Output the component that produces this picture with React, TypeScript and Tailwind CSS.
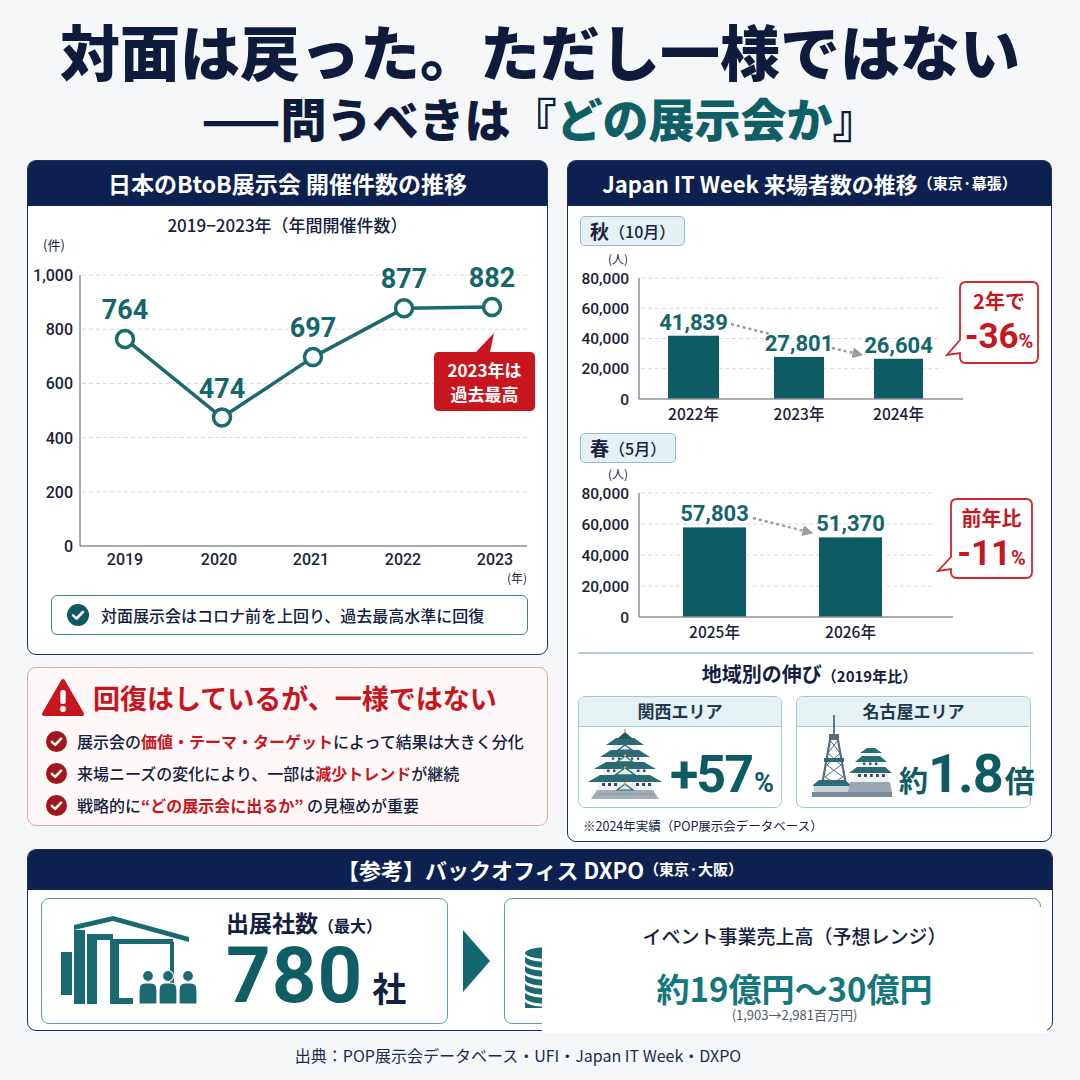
import React from 'react'

const NUM = "Roboto, 'Noto Sans CJK JP', sans-serif"
const JP = "'Noto Sans CJK JP', 'Noto Sans', sans-serif"

function Check({ color, size = 21 }: { color: string; size?: number }) {
  return (
    <svg width={size} height={size} viewBox="0 0 20 20" className="shrink-0">
      <circle cx="10" cy="10" r="10" fill={color} />
      <path d="M5.6 10.3 L8.7 13.3 L14.4 7.3" fill="none" stroke="#fff" strokeWidth="2.4" strokeLinecap="round" strokeLinejoin="round" />
    </svg>
  )
}

function Warning() {
  return (
    <svg width="44" height="40" viewBox="0 0 44 40" className="shrink-0">
      <path d="M22 3 L41 36 H3 Z" fill="#c8161e" stroke="#c8161e" strokeWidth="4" strokeLinejoin="round" />
      <rect x="19.3" y="12" width="5.4" height="14" rx="2" fill="#fff" />
      <circle cx="22" cy="31" r="2.9" fill="#fff" />
    </svg>
  )
}

function CountChart() {
  const base = 310
  const y = (v: number) => base - v * 0.271
  const pts = [
    { x: 97, v: 764 },
    { x: 194, v: 474 },
    { x: 285, v: 697 },
    { x: 376, v: 877 },
    { x: 464, v: 882 },
  ]
  const years: [string, number][] = [['2019', 97], ['2020', 191], ['2021', 283], ['2022', 375], ['2023', 467]]
  const ticks: [number, string][] = [[0, '0'], [200, '200'], [400, '400'], [600, '600'], [800, '800'], [1000, '1,000']]
  return (
    <svg width="519" height="353" viewBox="0 0 519 353" className="block">
      <text x="26" y="14" fontSize="13" textAnchor="middle" fill="#13213f" fontFamily={JP}>(件)</text>
      {ticks.map(([v, l]) => (
        <g key={v}>
          {v > 0 && <line x1="54" x2="502" y1={y(v)} y2={y(v)} stroke="#d6dade" strokeDasharray="4 3" />}
          <text x="45" y={y(v) + 6} fontSize="16" fontWeight="500" textAnchor="end" fill="#1a2238" fontFamily={NUM}>{l}</text>
        </g>
      ))}
      <line x1="52" x2="52" y1={y(1000)} y2={base} stroke="#8d9198" strokeWidth="1.5" />
      <line x1="52" x2="499" y1={base} y2={base} stroke="#8d9198" strokeWidth="1.5" />
      <polyline points={pts.map(p => `${p.x},${y(p.v)}`).join(' ')} fill="none" stroke="#1a6a70" strokeWidth="3.5" strokeLinejoin="round" />
      {pts.map(p => (
        <g key={p.x}>
          <circle cx={p.x} cy={y(p.v)} r="8.5" fill="#fff" stroke="#1a6a70" strokeWidth="3.5" />
          <text x={p.x} y={y(p.v) - 20} fontSize="27" fontWeight="700" textAnchor="middle" fill="#15666c" fontFamily={NUM}>{p.v}</text>
        </g>
      ))}
      {years.map(([l, x]) => (
        <text key={l} x={x} y="329" fontSize="16" fontWeight="500" textAnchor="middle" fill="#1a2238" fontFamily={NUM}>{l}</text>
      ))}
      <text x="489" y="347" fontSize="12" textAnchor="middle" fill="#1a2238" fontFamily={JP}>(年)</text>
      <path d="M411 116 H448 L466 97 L462 116 H502 Q507 116 507 121 V170 Q507 175 502 175 H411 Q406 175 406 170 V121 Q406 116 411 116 Z" fill="#c8161e" />
      <text x="456.5" y="141" fontSize="17" fontWeight="700" textAnchor="middle" fill="#fff" fontFamily={JP}>2023年は</text>
      <text x="456.5" y="165" fontSize="17" fontWeight="700" textAnchor="middle" fill="#fff" fontFamily={JP}>過去最高</text>
    </svg>
  )
}

type Bar = { x0: number; x1: number; v: number; label: string; year: string }
type Arrow = { x1: number; y1: number; x2: number; y2: number; head: boolean }
type Callout = { x0: number; x1: number; y0: number; y1: number; ax: number; ay: number; tb0: number; tb1: number; line1: string; big: string }

function BarChart({ id, height, yTop, yBase, gridEnd, axisEnd, yearY, bars, arrows, callout }: {
  id: string; height: number; yTop: number; yBase: number; gridEnd: number; axisEnd: number; yearY: number
  bars: Bar[]; arrows: Arrow[]; callout: Callout
}) {
  const y = (v: number) => yBase - (v / 80000) * (yBase - yTop)
  const ticks: [number, string][] = [[0, '0'], [20000, '20,000'], [40000, '40,000'], [60000, '60,000'], [80000, '80,000']]
  const c = callout
  const r = 6
  const d = `M${c.x0 + r} ${c.y0} H${c.x1 - r} Q${c.x1} ${c.y0} ${c.x1} ${c.y0 + r} V${c.y1 - r} Q${c.x1} ${c.y1} ${c.x1 - r} ${c.y1} H${c.x0 + r} Q${c.x0} ${c.y1} ${c.x0} ${c.y1 - r} V${c.tb1} L${c.ax} ${c.ay} L${c.x0} ${c.tb0} V${c.y0 + r} Q${c.x0} ${c.y0} ${c.x0 + r} ${c.y0} Z`
  const cx = (c.x0 + c.x1) / 2
  return (
    <svg width="483" height={height} viewBox={`0 0 483 ${height}`} className="block">
      <defs>
        <marker id={id} viewBox="0 0 10 10" refX="5" refY="5" markerWidth="4.4" markerHeight="4.4" orient="auto">
          <path d="M0 0 L10 5 L0 10 Z" fill="#9a9da2" />
        </marker>
      </defs>
      <text x="50" y={yTop - 14} fontSize="12" textAnchor="middle" fill="#1a2238" fontFamily={JP}>(人)</text>
      {ticks.map(([v, l]) => (
        <g key={v}>
          {v > 0 && <line x1="73" x2={gridEnd} y1={y(v)} y2={y(v)} stroke="#d6dade" strokeDasharray="4 3" />}
          <text x="61" y={y(v) + 5.5} fontSize="15.5" fontWeight="500" textAnchor="end" fill="#1a2238" fontFamily={NUM}>{l}</text>
        </g>
      ))}
      <line x1="71" x2="71" y1={yTop} y2={yBase} stroke="#8d9198" strokeWidth="1.5" />
      {bars.map(b => (
        <g key={b.year}>
          <rect x={b.x0} y={y(b.v)} width={b.x1 - b.x0} height={yBase - y(b.v)} fill="#0d5b63" />
          <text x={(b.x0 + b.x1) / 2} y={y(b.v) - 6} fontSize="22" fontWeight="700" textAnchor="middle" fill="#15666c" fontFamily={NUM}>{b.label}</text>
          <text x={(b.x0 + b.x1) / 2} y={yearY} fontSize="15.5" fontWeight="500" textAnchor="middle" fill="#1a2238" fontFamily={JP}>{b.year}</text>
        </g>
      ))}
      <line x1="71" x2={axisEnd} y1={yBase} y2={yBase} stroke="#8d9198" strokeWidth="1.5" />
      {arrows.map((a, i) => (
        <line key={i} x1={a.x1} y1={a.y1} x2={a.x2} y2={a.y2} stroke="#9a9da2" strokeWidth="2.5" strokeDasharray="3 3" markerEnd={a.head ? `url(#${id})` : undefined} />
      ))}
      <path d={d} fill="#fff" stroke="#d0262d" strokeWidth="1.8" />
      <text x={cx} y={c.y0 + 27} fontSize="20" fontWeight="700" textAnchor="middle" fill="#c8161e" fontFamily={JP}>{c.line1}</text>
      <text x={cx} y={c.y0 + 66} textAnchor="middle" fill="#c8161e" fontWeight="700" fontFamily={NUM}>
        <tspan fontSize="35">{c.big}</tspan>
        <tspan fontSize="20">%</tspan>
      </text>
    </svg>
  )
}

function SeasonTag({ main, sub }: { main: string; sub: string }) {
  return (
    <div className="inline-flex items-center h-[30px] px-[9px] rounded-[5px] border-[1.5px] border-[#8fbcc6] bg-[#e5f0f3] text-[#14213d]">
      <span className="text-[19px] font-bold">{main}</span>
      <span className="text-[16px] font-medium">{sub}</span>
    </div>
  )
}

function OsakaCastle() {
  const teal = '#2b6c74'
  const wall = '#eef1f4'
  const gold = '#e2a23b'
  return (
    <svg width="76" height="70" viewBox="0 0 76 70" className="shrink-0">
      <path d="M10 61 H66 L72 70 H4 Z" fill="#a3adb8" />
      <path d="M9 65 H67" stroke="#8a95a1" strokeWidth="1" />
      <rect x="11" y="51" width="54" height="10" fill={wall} />
      <path d="M1 53 L13 46 H63 L75 53 Z" fill={teal} />
      <rect x="16" y="38" width="44" height="8" fill={wall} />
      <path d="M7 40 L19 33 H57 L69 40 Z" fill={teal} />
      <rect x="21" y="26" width="34" height="7" fill={wall} />
      <path d="M13 28 L24 21 H52 L63 28 Z" fill={teal} />
      <rect x="26" y="15" width="24" height="6" fill={wall} />
      <path d="M19 16 L29 9 H47 L57 16 Z" fill={teal} />
      <path d="M30 10 L38 3 L46 10 Z" fill="#1f5a61" />
      <rect x="37.3" y="0" width="1.4" height="4" fill={gold} />
      <path d="M28 46 L38 39 L48 46 Z" fill={wall} stroke={teal} strokeWidth="1.5" />
      <path d="M30 33 L38 27 L46 33 Z" fill={wall} stroke={teal} strokeWidth="1.3" />
      <path d="M31 21 L38 16 L45 21 Z" fill={wall} stroke={teal} strokeWidth="1.2" />
      <circle cx="38" cy="38.5" r="1.2" fill={gold} />
      <circle cx="38" cy="26.5" r="1.2" fill={gold} />
      <path d="M30 61 L38 55 L46 61 Z" fill="#dfe4ea" stroke={teal} strokeWidth="1.2" />
      <circle cx="38" cy="54.5" r="1.2" fill={gold} />
      {[15, 21, 27, 49, 55, 61].map(x => (
        <rect key={x} x={x} y="54" width="3" height="3" fill="#3b4656" />
      ))}
      {[20, 26, 50, 56].map(x => (
        <rect key={x} x={x} y="40.5" width="2.5" height="2.5" fill="#3b4656" />
      ))}
      {[25, 31, 44, 50].map(x => (
        <rect key={x} x={x} y="28.5" width="2.2" height="2.2" fill="#3b4656" />
      ))}
    </svg>
  )
}

function NagoyaIcon() {
  const teal = '#2b6c74'
  const steel = '#566b7c'
  const wall = '#eef1f4'
  return (
    <svg width="80" height="84" viewBox="0 0 80 84" className="shrink-0">
      <line x1="22" y1="0" x2="22" y2="20" stroke={steel} strokeWidth="1.8" />
      <rect x="17" y="19" width="10" height="6" fill={steel} />
      <path d="M18 25 L9 76 M26 25 L35 76" stroke={steel} strokeWidth="2.2" fill="none" />
      <path d="M18 25 L28 38 L15 50 L31 62 L11 74 M26 25 L16 38 L29 50 L13 62 L33 74" stroke={steel} strokeWidth="1" fill="none" />
      <rect x="12" y="43" width="20" height="4" fill={teal} />
      <path d="M0 71 L7 65 H33 L40 71 Z" fill={teal} />
      <rect x="2" y="71" width="36" height="6" fill="#c9d1d9" />
      <path d="M38 67 H78 L80 77 H36 Z" fill="#9aa6b2" />
      <rect x="42" y="56" width="34" height="11" fill={wall} />
      <path d="M37 58 L45 52 H73 L80 58 Z" fill={teal} />
      <rect x="47" y="45" width="24" height="7" fill={wall} />
      <path d="M43 47 L50 41 H68 L75 47 Z" fill={teal} />
      <rect x="52" y="37" width="14" height="4" fill={wall} />
      <path d="M48 38 L55 33 H63 L70 38 Z" fill={teal} />
      {[46, 52, 58, 64, 70].map(x => (
        <rect key={x} x={x} y="59" width="2.8" height="3" fill="#3b4656" />
      ))}
      {[51, 57, 63].map(x => (
        <rect key={x} x={x} y="47.5" width="2.4" height="2.4" fill="#3b4656" />
      ))}
      <rect x="0" y="77" width="80" height="5" fill="#7d8b99" />
    </svg>
  )
}

function BuildingIcon() {
  const c = '#1b6a72'
  return (
    <svg width="138" height="90" viewBox="0 0 138 90" className="shrink-0">
      <rect x="0" y="36" width="11" height="43" fill={c} />
      <rect x="13" y="14" width="11" height="74" fill={c} />
      <path d="M13 9 L52 0 L128 21 L128 26 L52 5 L13 14 Z" fill={c} />
      <path d="M26 18 H52 V24 H36 V88 H26 Z" fill={c} />
      <path d="M49 23 H112 V28 H58 V82 H72 V88 H49 Z" fill={c} />
      <rect x="109" y="26" width="4" height="62" fill={c} />
      {[87, 107, 127].map(x => (
        <g key={x}>
          <circle cx={x} cy="60" r="5.5" fill={c} stroke="#fff" strokeWidth="1.2" />
          <path d={`M${x - 9} 88 V74 Q${x - 9} 67 ${x - 3} 67 H${x + 3} Q${x + 9} 67 ${x + 9} 74 V88 Z`} fill={c} stroke="#fff" strokeWidth="1.2" />
        </g>
      ))}
    </svg>
  )
}

function Coins() {
  const c = '#1b6a72'
  return (
    <svg width="50" height="62" viewBox="0 0 50 62" className="shrink-0">
      {[0, 1, 2, 3, 4, 5].map(i => (
        <path key={i} d={`M1 ${10 + i * 9} V${16 + i * 9} A24 6 0 0 0 49 ${16 + i * 9} V${10 + i * 9} A24 6 0 0 1 1 ${10 + i * 9} Z`} fill={c} />
      ))}
      <ellipse cx="25" cy="7" rx="24" ry="6" fill={c} />
    </svg>
  )
}

export default function App() {
  return (
    <div className="w-[1080px] h-[1080px] overflow-hidden bg-[#f6f7f9] text-[#13213f] font-['Noto_Sans_CJK_JP','Noto_Sans',sans-serif]">
      {/* title */}
      <div className="pt-[17px] text-center text-[#0f1b3d]">
        <h1 className="text-[60px] leading-[66px] font-black">対面は戻った。ただし一様ではない</h1>
        <p className="mt-[7px] text-[46px] leading-[54px] font-black">
          ——問うべきは『<span className="text-[#0e5f66]">どの展示会か</span>』
        </p>
      </div>

      <div className="mt-[16px] px-[27px] flex items-start gap-[19px]">
        {/* left column */}
        <div className="w-[521px] shrink-0">
          <div className="bg-white border-[1.5px] border-[#1d2f5c] rounded-[9px]">
            <div className="h-[45px] bg-[#0d2150] rounded-t-[7px] flex items-center justify-center text-white text-[23px] font-bold">
              日本のBtoB展示会 開催件数の推移
            </div>
            <div className="mt-[8px] text-center text-[17px] leading-[22px] font-medium">2019−2023年（年間開催件数）</div>
            <CountChart />
            <div className="mt-[6px] ml-[23px] mr-[19px] h-[40px] rounded-[6px] border-[1.5px] border-[#3f8690] flex items-center gap-[12px] pl-[15px]">
              <Check color="#0f5a62" size={22} />
              <span className="text-[16px] font-medium">対面展示会はコロナ前を上回り、過去最高水準に回復</span>
            </div>
            <div className="h-[19px]" />
          </div>

          <div className="mt-[12px] bg-[#fff8f8] border-[1.5px] border-[#e3a5a5] rounded-[9px] px-[13px] pt-[10px] pb-[8px]">
            <div className="h-[40px] flex items-center gap-[8px]">
              <Warning />
              <span className="text-[27px] font-bold text-[#c8161e]">回復はしているが、一様ではない</span>
            </div>
            <div className="mt-[11px] pl-[5px] flex flex-col gap-[8px] text-[16px] font-medium">
              <div className="h-[24px] flex items-center gap-[10px]">
                <Check color="#a3161f" />
                <span>展示会の<span className="text-[#c8161e] font-bold">価値・テーマ・ターゲット</span>によって結果は大きく分化</span>
              </div>
              <div className="h-[24px] flex items-center gap-[10px]">
                <Check color="#a3161f" />
                <span>来場ニーズの変化により、一部は<span className="text-[#c8161e] font-bold">減少トレンド</span>が継続</span>
              </div>
              <div className="h-[24px] flex items-center gap-[10px]">
                <Check color="#a3161f" />
                <span>戦略的に<span className="text-[#c8161e] font-bold">“どの展示会に出るか”</span> の見極めが重要</span>
              </div>
            </div>
          </div>
        </div>

        {/* right column */}
        <div className="w-[485px] shrink-0 bg-white border-[1.5px] border-[#1d2f5c] rounded-[9px] pb-[6px]">
          <div className="h-[45px] bg-[#0d2150] rounded-t-[7px] flex items-center justify-center text-white font-bold">
            <span className="text-[22px]">Japan IT Week 来場者数の推移</span>
            <span className="text-[15px]">（東京·幕張）</span>
          </div>
          <div className="mt-[10px] ml-[12px]">
            <SeasonTag main="秋" sub="（10月）" />
          </div>
          <div className="mt-[4px]">
            <BarChart
              id="arrA"
              height={175}
              yTop={28}
              yBase={149}
              gridEnd={375}
              axisEnd={395}
              yearY={170}
              bars={[
                { x0: 100, x1: 151, v: 41839, label: '41,839', year: '2022年' },
                { x0: 206, x1: 256, v: 27801, label: '27,801', year: '2023年' },
                { x0: 306, x1: 355, v: 26604, label: '26,604', year: '2024年' },
              ]}
              arrows={[
                { x1: 163, y1: 74, x2: 202, y2: 84, head: false },
                { x1: 264, y1: 98, x2: 290, y2: 104, head: true },
              ]}
              callout={{ x0: 392, x1: 470, y0: 32, y1: 113, ax: 379, ay: 105, tb0: 90, tb1: 103, line1: '2年で', big: '-36' }}
            />
          </div>
          <div className="mt-[8px] ml-[12px]">
            <SeasonTag main="春" sub="（5月）" />
          </div>
          <div className="mt-[3px]">
            <BarChart
              id="arrB"
              height={180}
              yTop={27}
              yBase={151}
              gridEnd={367}
              axisEnd={385}
              yearY={172}
              bars={[
                { x0: 115, x1: 178, v: 57803, label: '57,803', year: '2025年' },
                { x0: 251, x1: 314, v: 51370, label: '51,370', year: '2026年' },
              ]}
              arrows={[{ x1: 185, y1: 52, x2: 240, y2: 66, head: true }]}
              callout={{ x0: 383, x1: 464, y0: 33, y1: 112, ax: 370, ay: 105, tb0: 91, tb1: 103, line1: '前年比', big: '-11' }}
            />
          </div>
          <div className="mt-[6px] ml-[10px] mr-[18px] h-[1.5px] bg-[#b8c9d6]" />
          <div className="mt-[9px] text-center leading-[22px] font-bold">
            <span className="text-[20px]">地域別の伸び</span>
            <span className="text-[15px]">（2019年比）</span>
          </div>
          <div className="mt-[9px] px-[10px] flex gap-[14px]">
            <div className="w-[204px] h-[112px] rounded-[7px] border-[1.5px] border-[#a3c9d0] bg-white">
              <div className="h-[30px] bg-[#e6f1f4] border-b-[1.5px] border-[#a9cdd4] rounded-t-[6px] flex items-center justify-center text-[17px] font-bold text-[#1e3b4f]">
                関西エリア
              </div>
              <div className="h-[79px] flex items-end pb-[7px] pl-[8px]">
                <OsakaCastle />
                <div className="ml-[7px] mb-[-2px] flex items-baseline text-[#0e5b63] font-bold font-['Roboto',sans-serif] leading-none">
                  <span className="text-[52px] tracking-[-2px]">+57</span>
                  <span className="text-[27px] ml-[2px]">%</span>
                </div>
              </div>
            </div>
            <div className="w-[235px] h-[112px] rounded-[7px] border-[1.5px] border-[#a3c9d0] bg-white">
              <div className="h-[30px] bg-[#e6f1f4] border-b-[1.5px] border-[#a9cdd4] rounded-t-[6px] flex items-center justify-center text-[17px] font-bold text-[#1e3b4f]">
                名古屋エリア
              </div>
              <div className="h-[79px] flex items-end pb-[7px] pl-[15px]">
                <NagoyaIcon />
                <div className="ml-[7px] mb-[-2px] flex items-baseline text-[#0e5b63] font-bold leading-none">
                  <span className="text-[29px]">約</span>
                  <span className="text-[54px] tracking-[-1px] font-['Roboto',sans-serif]">1.8</span>
                  <span className="text-[30px] ml-[2px]">倍</span>
                </div>
              </div>
            </div>
          </div>
          <div className="mt-[9px] ml-[15px] text-[12.5px] leading-[18px]">※2024年実績（POP展示会データベース）</div>
        </div>
      </div>

      {/* bottom panel */}
      <div className="mx-[27px] mt-[7px] bg-white border-[1.5px] border-[#1d2f5c] rounded-[9px]">
        <div className="h-[40px] bg-[#0d2150] rounded-t-[7px] flex items-center justify-center text-white font-bold">
          <span className="text-[22px]">【参考】バックオフィス DXPO</span>
          <span className="text-[15px]">（東京·大阪）</span>
        </div>
        <div className="flex pt-[8px] pb-[6px] pl-[13px] pr-[11px]">
          <div className="w-[407px] h-[126px] shrink-0 rounded-[8px] border-[1.5px] border-[#5f9ea6] bg-white flex items-center pl-[19px]">
            <BuildingIcon />
            <div className="ml-[27px] self-start mt-[9px] flex flex-col">
              <div className="leading-[28px] font-bold">
                <span className="text-[23px]">出展社数</span>
                <span className="text-[16px]">（最大）</span>
              </div>
              <div className="mt-[4px] h-[66px] flex items-baseline leading-[66px]">
                <span className="text-[78px] font-bold text-[#0f5e66] font-['Roboto',sans-serif] tracking-[1px]">780</span>
                <span className="text-[34px] font-bold ml-[9px]">社</span>
              </div>
            </div>
          </div>
          <div className="w-[56px] shrink-0 flex items-center justify-center">
            <svg width="27" height="62" viewBox="0 0 27 62">
              <path d="M0 0 L27 31 L0 62 Z" fill="#136870" />
            </svg>
          </div>
          <div className="relative flex-1 h-[126px] rounded-[8px] border-[1.5px] border-[#5f9ea6] bg-white">
            <div className="absolute left-[19px] top-[47px]">
              <Coins />
            </div>
            <div className="absolute left-[37px] top-[8px] right-[-7px] bottom-[-10px] bg-white flex flex-col items-center pt-[16px]">
              <div className="text-[19px] leading-[26px] font-medium">イベント事業売上高（予想レンジ）</div>
              <div className="mt-[22px] text-[33px] leading-[34px] font-bold text-[#14777b]">約19億円〜30億円</div>
              <div className="mt-[2px] text-[13px] leading-[16px] text-[#555c66]">(1,903→2,981百万円)</div>
            </div>
          </div>
        </div>
      </div>

      <div className="mt-[14px] pr-[44px] text-center text-[16px] leading-[20px] text-[#1b2b55]">
        出典：POP展示会データベース・UFI・Japan IT Week・DXPO
      </div>
    </div>
  )
}
